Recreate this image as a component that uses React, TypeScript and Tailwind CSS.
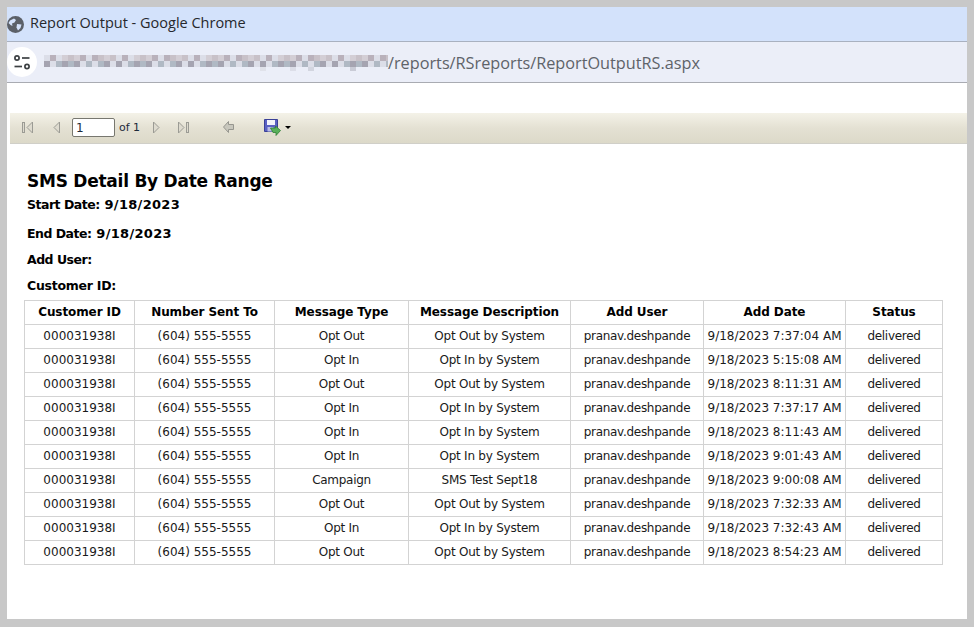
const rows = [
  ['Opt Out', 'Opt Out by System', '9/18/2023 7:37:04 AM'],
  ['Opt In', 'Opt In by System', '9/18/2023 5:15:08 AM'],
  ['Opt Out', 'Opt Out by System', '9/18/2023 8:11:31 AM'],
  ['Opt In', 'Opt In by System', '9/18/2023 7:37:17 AM'],
  ['Opt In', 'Opt In by System', '9/18/2023 8:11:43 AM'],
  ['Opt In', 'Opt In by System', '9/18/2023 9:01:43 AM'],
  ['Campaign', 'SMS Test Sept18', '9/18/2023 9:00:08 AM'],
  ['Opt Out', 'Opt Out by System', '9/18/2023 7:32:33 AM'],
  ['Opt In', 'Opt In by System', '9/18/2023 7:32:43 AM'],
  ['Opt Out', 'Opt Out by System', '9/18/2023 8:54:23 AM'],
];

const headers = ['Customer ID', 'Number Sent To', 'Message Type', 'Message Description', 'Add User', 'Add Date', 'Status'];

// pixelated, blurred out host name in the address bar
const mosaic = ['#dcdee8', '#c9cbd6', '#bcbeca', '#d3ced5', '#a5a4b1', '#c4cad3', '#b9b1bb', '#e0e2ea', '#b0b9c4', '#c8c1c8', '#9a99a5', '#d2d5df'];

function BlurredUrl() {
  return (
    <svg width="344" height="20" viewBox="0 0 344 20" className="block shrink-0">
      {Array.from({ length: 58 }).map((_, i) => (
        <g key={i}>
          <rect x={i * 6} y="3" width="6" height="6" fill={mosaic[(i * 5 + (i % 3)) % mosaic.length]} />
          <rect x={i * 6} y="9" width="6" height="6" fill={mosaic[(i * 7 + 4 + (i % 4)) % mosaic.length]} />
        </g>
      ))}
      {[36, 41, 44, 51].map((c, i) => (
        <rect key={c} x={c * 6} y="15" width="6" height="4" fill={mosaic[[7, 0, 11, 1][i]]} />
      ))}
    </svg>
  );
}

function GlobeIcon() {
  return (
    <svg width="17" height="17" viewBox="0 0 17 17" className="block">
      <circle cx="8.5" cy="8.5" r="8.5" fill="#5b6068" />
      <path d="M3 4.5 L7 2.5 L9 4 L7.5 6.5 L5 7.5 L5.5 10 L3.5 9 L1.5 7 Z" fill="#d3e2fb" />
      <path d="M10 8 L14.5 8.5 L13.5 12 L11 14.5 L9.5 11.5 Z" fill="#d3e2fb" />
    </svg>
  );
}

function TuneIcon() {
  return (
    <svg width="16" height="15" viewBox="0 0 16 15" fill="none" stroke="#3c4043" strokeWidth="1.7" className="block">
      <circle cx="3" cy="3" r="2.1" />
      <path d="M8 3 H15.5" />
      <path d="M0.5 11.5 H8" />
      <circle cx="13" cy="11.5" r="2.1" />
    </svg>
  );
}

function FirstIcon() {
  return (
    <svg width="12" height="13" viewBox="0 0 12 13" className="block">
      <rect x="0.5" y="1.5" width="2" height="10" fill="#dedbcf" stroke="#9b9b94" />
      <path d="M10.5 1 L5 6.5 L10.5 12 Z" fill="#dedbcf" stroke="#9b9b94" />
    </svg>
  );
}

function PrevIcon() {
  return (
    <svg width="7" height="13" viewBox="0 0 7 13" className="block">
      <path d="M6.5 1 L1 6.5 L6.5 12 Z" fill="#dedbcf" stroke="#9b9b94" />
    </svg>
  );
}

function NextIcon() {
  return (
    <svg width="7" height="13" viewBox="0 0 7 13" className="block">
      <path d="M0.5 1 L6 6.5 L0.5 12 Z" fill="#dedbcf" stroke="#9b9b94" />
    </svg>
  );
}

function LastIcon() {
  return (
    <svg width="12" height="13" viewBox="0 0 12 13" className="block">
      <path d="M0.5 1 L6 6.5 L0.5 12 Z" fill="#dedbcf" stroke="#9b9b94" />
      <rect x="8.5" y="1.5" width="2" height="10" fill="#dedbcf" stroke="#9b9b94" />
    </svg>
  );
}

function BackIcon() {
  return (
    <svg width="11" height="12" viewBox="0 0 11 12" className="block">
      <path d="M5.5 0.5 L0.5 6 L5.5 11.5 L5.5 8.5 L10.5 8.5 L10.5 3.5 L5.5 3.5 Z" fill="#c8c7bd" stroke="#96968f" />
    </svg>
  );
}

function SaveIcon() {
  return (
    <svg width="17" height="17" viewBox="0 0 17 17" className="block">
      <path d="M0.5 0.5 H13.5 V12.5 H0.5 Z" fill="#5a60c4" stroke="#3a4096" />
      <rect x="3" y="1" width="8" height="5" fill="#f2f3fb" />
      <rect x="3.5" y="8" width="6" height="4.5" fill="#b9bde6" />
      <path d="M6.5 9 L11.5 9 L11.5 7 L16.5 11.5 L12 16.5 L12 13.5 L9 13.5 Z" fill="#58b05a" stroke="#2f7d35" strokeWidth="0.8" />
    </svg>
  );
}

function Param({ label, value, className }: { label: string; value?: string; className: string }) {
  return (
    <p className={`pl-[3px] text-[12.5px] leading-[18px] font-bold ${className}`}>
      <span>{label}</span>
      {value && <span className="text-[13px] tracking-[0.3px]"> {value}</span>}
    </p>
  );
}

export default function App() {
  return (
    <div className="w-[974px] h-[627px] overflow-hidden bg-[#c8c8c8] pt-[7px] pl-[7px] pr-[7px] pb-2">
      <div className="h-full bg-white flex flex-col">
        <div className="h-[35px] shrink-0 bg-[#d3e2fb] border-b border-[#a9b1c0] flex items-center gap-[6px] font-['Open_Sans',sans-serif] text-[14.5px] text-[#26282c]">
          <GlobeIcon />
          <span className="-mt-[2px]">Report Output - Google Chrome</span>
        </div>
        <div className="h-[41px] shrink-0 bg-[#ebeef8] border-b border-[#a9abb2] flex items-center">
          <div className="w-[30px] h-[30px] shrink-0 rounded-full bg-white flex items-center justify-center">
            <TuneIcon />
          </div>
          <div className="ml-[7px]">
            <BlurredUrl />
          </div>
          <span className="mt-[3px] font-['Open_Sans',sans-serif] text-[16.25px] text-[#5e6369]">/reports/RSreports/ReportOutputRS.aspx</span>
        </div>

        <div className="flex-1 pl-[3px] pt-[30px] font-['DejaVu_Sans',sans-serif] text-black">
          <div className="h-[31px] pb-[2px] bg-gradient-to-b from-[#f4f2e8] via-[#e4e1d3] to-[#dcd9c9] border-b border-[#d0cfc8] flex items-center text-[11px] text-[#1d2a3a]">
            <div className="ml-[12px]"><FirstIcon /></div>
            <div className="ml-[19px]"><PrevIcon /></div>
            <div className="ml-[12px] w-[43px] h-[19px] bg-white border border-[#77776f] rounded-[2px] pl-[3px] text-[12px] leading-[19px]">1</div>
            <span className="ml-[4px] mt-[2px]">of 1</span>
            <div className="ml-[13px]"><NextIcon /></div>
            <div className="ml-[18px]"><LastIcon /></div>
            <div className="ml-[33px]"><BackIcon /></div>
            <div className="ml-[30px]"><SaveIcon /></div>
            <div className="ml-[4px] w-0 h-0 border-x-[3px] border-x-transparent border-t-[3px] border-t-black" />
          </div>

          <div className="pl-[14px]">
            <h1 className="pl-[3px] mt-[25px] text-[17px] tracking-[-0.25px] leading-[24px] font-bold">SMS Detail By Date Range</h1>
            <Param className="mt-[3px] [&>span:first-child]:tracking-[-0.5px]" label="Start Date:" value="9/18/2023" />
            <Param className="mt-[11px] [&>span:first-child]:tracking-[-0.5px]" label="End Date:" value="9/18/2023" />
            <Param className="mt-[8px] [&>span:first-child]:tracking-[-0.5px]" label="Add User:" />
            <Param className="mt-[8px] [&>span:first-child]:tracking-[-0.25px]" label="Customer ID:" />

            <table className="mt-[5px] w-[918px] table-fixed border-collapse text-[12px]">
              <colgroup>
                <col className="w-[110px]" />
                <col className="w-[140px]" />
                <col className="w-[134px]" />
                <col className="w-[162px]" />
                <col className="w-[133px]" />
                <col className="w-[142px]" />
                <col className="w-[97px]" />
              </colgroup>
              <thead>
                <tr className="h-[24px]">
                  {headers.map((h) => (
                    <th key={h} className="border border-[#d3d3d3] p-0 pb-[2px] font-bold text-[12px] tracking-[-0.1px] text-center">{h}</th>
                  ))}
                </tr>
              </thead>
              <tbody>
                {rows.map((r, i) => (
                  <tr key={i} className="h-[24px] text-[#1a1a1a]">
                    <td className="border border-[#d3d3d3] p-0 pb-[2px] text-center">000031938I</td>
                    <td className="border border-[#d3d3d3] p-0 pb-[2px] text-center">(604) 555-5555</td>
                    <td className="border border-[#d3d3d3] p-0 pb-[2px] tracking-[-0.28px] text-center">{r[0]}</td>
                    <td className="border border-[#d3d3d3] p-0 pb-[2px] tracking-[-0.24px] text-center">{r[1]}</td>
                    <td className="border border-[#d3d3d3] p-0 pb-[2px] tracking-[-0.3px] text-center">pranav.deshpande</td>
                    <td className="border border-[#d3d3d3] p-0 pb-[2px] text-center">{r[2]}</td>
                    <td className="border border-[#d3d3d3] p-0 pb-[2px] tracking-[-0.3px] text-center">delivered</td>
                  </tr>
                ))}
              </tbody>
            </table>
          </div>
        </div>
      </div>
    </div>
  );
}
